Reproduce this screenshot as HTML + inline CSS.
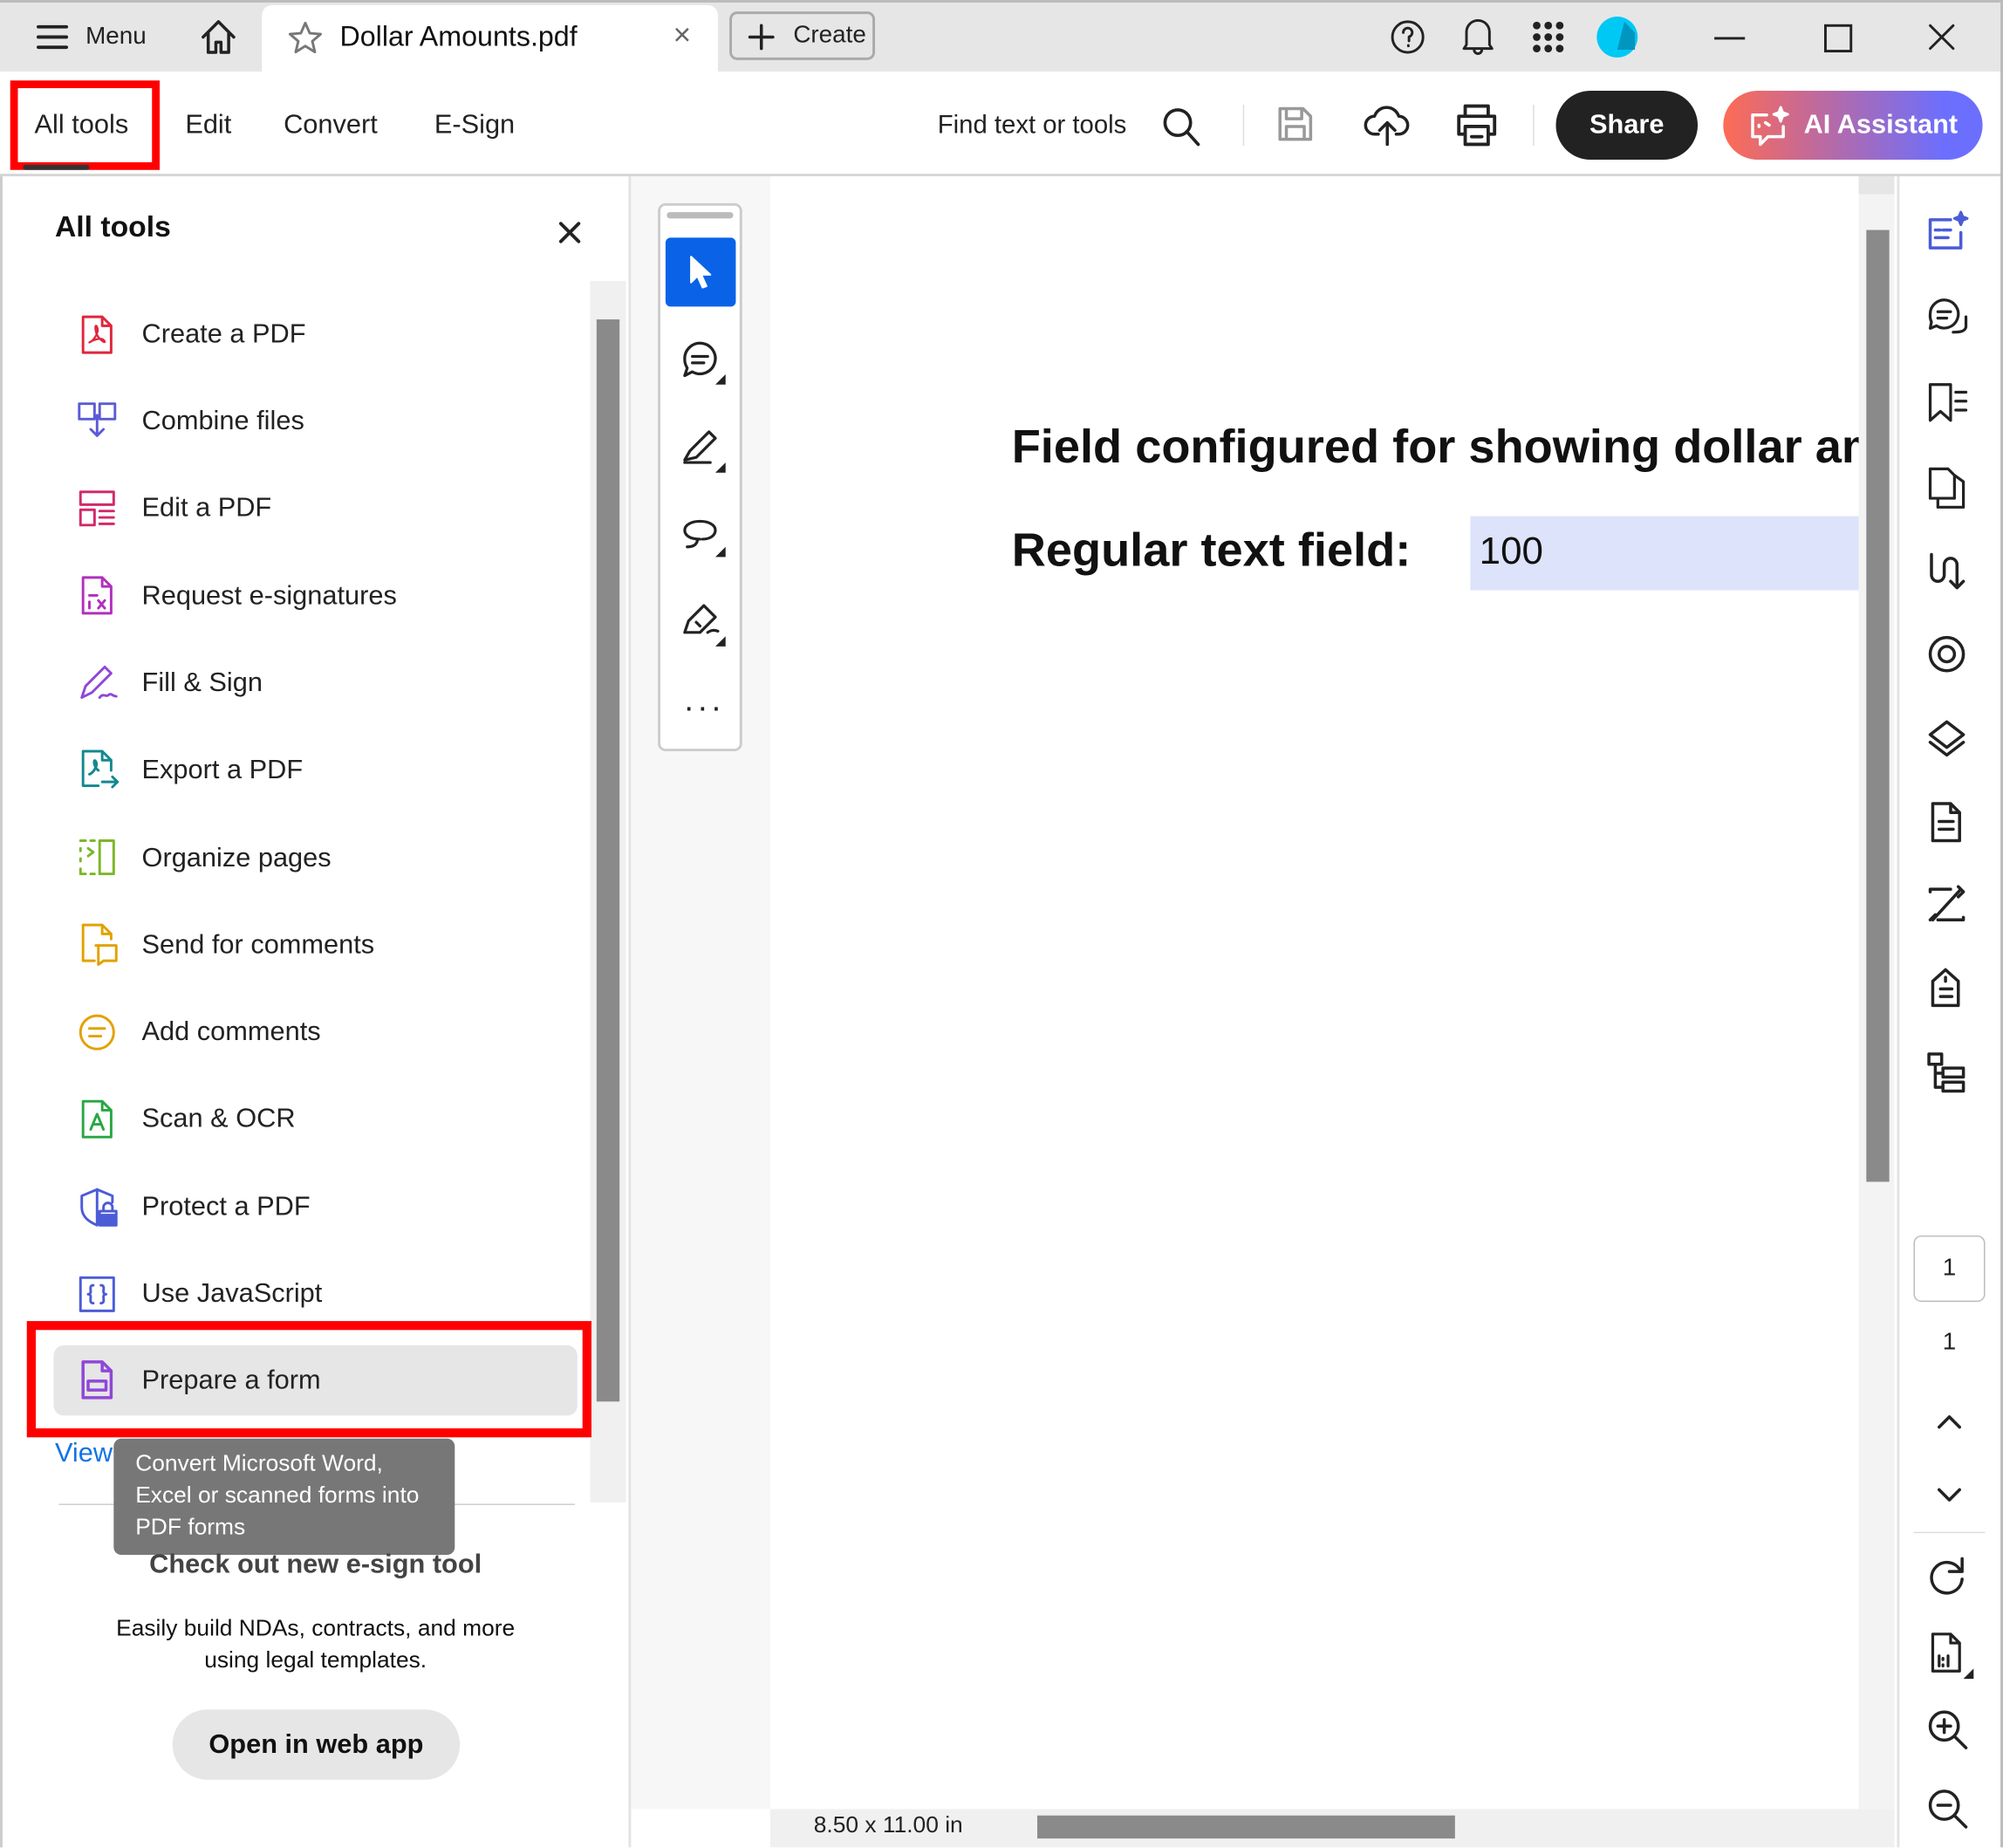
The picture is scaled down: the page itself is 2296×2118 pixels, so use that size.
<!DOCTYPE html>
<html><head><meta charset="utf-8"><style>
html,body{margin:0;padding:0;width:2296px;height:2118px;overflow:hidden;background:#fff}
#w{position:absolute;left:0;top:0;width:1568px;height:1446px;transform:scale(1.464286);transform-origin:0 0;font-family:"Liberation Sans",sans-serif;color:#222;overflow:hidden;background:#fff}
.a{position:absolute}
svg{position:absolute;fill:none;stroke:#222;stroke-width:2;stroke-linecap:round;stroke-linejoin:round}
.it{position:absolute;left:111px;font-size:21px;color:#222}
.tb{font-size:21px;color:#222;position:absolute;top:86px}
</style></head><body><div id="w">
<!-- title bar -->
<div class="a" style="left:0;top:0;width:1568px;height:56px;background:#e6e6e6;border-top:2px solid #bbb;box-sizing:border-box"></div>
<svg style="left:28px;top:18px" width="26" height="22"><path d="M2 3h22M2 11h22M2 19h22" stroke-width="2.6"/></svg>
<div class="a" style="left:67px;top:18px;font-size:19px">Menu</div>
<svg style="left:155px;top:13px" width="32" height="32"><path d="M4 16L16 4l12 12M8 13v15h6v-8h4v8h6V13" stroke-width="2.4"/></svg>
<div class="a" style="left:205px;top:4px;width:357px;height:52px;background:#fff;border-radius:8px 8px 0 0"></div>
<svg style="left:224px;top:15px" width="30" height="30"><path d="M15 3l3.5 8 8.5.7-6.5 5.6 2 8.4L15 21l-7.5 4.7 2-8.4L3 11.7l8.5-.7z" stroke="#777"/></svg>
<div class="a" style="left:266px;top:16px;font-size:22px;color:#111">Dollar Amounts.pdf</div>
<div class="a" style="left:527px;top:14px;font-size:24px;color:#666">×</div>
<div class="a" style="left:571px;top:9px;width:114px;height:38px;border:2px solid #aaa;border-radius:6px;box-sizing:border-box"></div>
<svg style="left:585px;top:18px" width="22" height="22"><path d="M11 2v18M2 11h18" stroke-width="2.4"/></svg>
<div class="a" style="left:621px;top:17px;font-size:19px">Create</div>
<svg style="left:1087px;top:14px" width="30" height="30"><circle cx="15" cy="15" r="12"/><path d="M11.5 11.5a3.5 3.5 0 1 1 4.5 3.3V18M15.5 21.5v.5"/></svg>
<svg style="left:1141px;top:12px" width="32" height="34"><path d="M7 23V13a9 9 0 0 1 18 0v10l2 3H5zM13 27a3 3 0 0 0 6 0"/></svg>
<svg style="left:1198px;top:15px" width="30" height="30"><g fill="#222" stroke="none"><circle cx="5" cy="5" r="3"/><circle cx="14" cy="5" r="3"/><circle cx="23" cy="5" r="3"/><circle cx="5" cy="14" r="3"/><circle cx="14" cy="14" r="3"/><circle cx="23" cy="14" r="3"/><circle cx="5" cy="23" r="3"/><circle cx="14" cy="23" r="3"/><circle cx="23" cy="23" r="3"/></g></svg>
<div class="a" style="left:1250px;top:13px;width:32px;height:32px;border-radius:50%;background:#00c8f5"></div>
<div class="a" style="left:1266px;top:17px;width:14px;height:22px;background:#0096c0;clip-path:polygon(40% 0,100% 40%,100% 100%,0 100%)"></div>
<div class="a" style="left:1342px;top:29px;width:24px;height:2px;background:#222"></div>
<div class="a" style="left:1428px;top:19px;width:18px;height:18px;border:2px solid #222"></div>
<svg style="left:1508px;top:17px" width="24" height="24"><path d="M3 3l18 18M21 3L3 21"/></svg>
<!-- toolbar -->
<div class="a" style="left:0;top:136px;width:1568px;height:2px;background:#d5d5d5"></div>
<div class="a" style="left:8px;top:63px;width:117px;height:70px;border:6px solid #f00;box-sizing:border-box"></div>
<div class="tb" style="left:27px">All tools</div>
<div class="a" style="left:18px;top:129px;width:52px;height:4px;background:#333;border-radius:2px"></div>
<div class="tb" style="left:145px">Edit</div>
<div class="tb" style="left:222px">Convert</div>
<div class="tb" style="left:340px">E-Sign</div>
<div class="tb" style="left:734px;font-size:20px;top:87px">Find text or tools</div>
<svg style="left:908px;top:82px" width="34" height="34"><circle cx="14" cy="14" r="10" stroke-width="2.5"/><path d="M21 21l9 10" stroke-width="2.5"/></svg>
<div class="a" style="left:973px;top:82px;width:1px;height:32px;background:#ddd"></div>
<svg style="left:998px;top:81px" width="32" height="32"><path d="M4 4h18l6 6v18H4zM9 4v8h12V4M9 28V18h14v10" stroke="#999" stroke-width="2.4"/></svg>
<svg style="left:1067px;top:79px" width="38" height="38"><path d="M12 26H9a7 7 0 0 1 0-14 10 10 0 0 1 19 0 7 7 0 0 1 0 14h-2M19 34V17M13 23l6-6 6 6" stroke-width="2.4"/></svg>
<svg style="left:1138px;top:80px" width="36" height="36"><path d="M9 11V3h18v8M4 11h28v14h-5M9 25H4V11M9 19h18v14H9zM14 27h8" stroke-width="2.6"/></svg>
<div class="a" style="left:1200px;top:82px;width:1px;height:32px;background:#ddd"></div>
<div class="a" style="left:1218px;top:71px;width:111px;height:54px;background:#222;border-radius:27px;color:#fff;font-size:21px;font-weight:bold;text-align:center;line-height:54px">Share</div>
<div class="a" style="left:1349px;top:71px;width:203px;height:54px;background:linear-gradient(90deg,#fe6b55,#b86aa5 40%,#6c6ffd 85%);border-radius:27px;color:#fff;font-size:21px;font-weight:bold;line-height:54px;padding-left:63px;box-sizing:border-box">AI Assistant</div>
<svg style="left:1368px;top:82px" width="36" height="34"><path d="M15 8H4v17h6v6l6-6h12v-8M9 16v1M14 14l3 2" stroke="#fff" stroke-width="2.4"/><path d="M26 2l1.5 4 4 1.5-4 1.5-1.5 4-1.5-4-4-1.5 4-1.5z" stroke="#fff" fill="#fff"/></svg>
<!-- left panel -->
<div class="a" style="left:0;top:138px;width:2px;height:1308px;background:#ccc"></div>
<div class="a" style="left:492px;top:138px;width:2px;height:1308px;background:#e3e3e3"></div>
<div class="a" style="left:43px;top:164px;font-size:23px;font-weight:bold;color:#111">All tools</div>
<svg style="left:437px;top:173px" width="18" height="18"><path d="M2 2l14 14M16 2L2 16" stroke-width="2.6"/></svg>
<div class="a" style="left:462px;top:220px;width:28px;height:956px;background:#f0f0f0"></div>
<div class="a" style="left:467px;top:250px;width:18px;height:847px;background:#8a8a8a"></div>
<!-- items -->
<svg style="left:60px;top:246px" width="32" height="32"><path d="M5 2h15l7 7v21H5zM20 2v7h7" stroke="#e0263c"/><path d="M10 22c3-1 8-8 6-12s-2 5 2 9 5 3 3 1-8 0-11 2" stroke="#e0263c" stroke-width="1.6"/></svg>
<div class="it" style="top:250px">Create a PDF</div>
<svg style="left:60px;top:313px" width="32" height="32"><path d="M2 3h12v12H2zM18 3h12v12H18zM16 12v16M11 23l5 5 5-5" stroke="#5b5bd6"/></svg>
<div class="it" style="top:318px">Combine files</div>
<svg style="left:60px;top:382px" width="32" height="32"><path d="M3 3h26v10H3zM3 17h11v12H3zM18 18h11M18 23h11M18 28h11" stroke="#d12a6a"/></svg>
<div class="it" style="top:386px">Edit a PDF</div>
<svg style="left:60px;top:450px" width="32" height="32"><path d="M5 2h15l7 7v21H5zM20 2v7h7M10 16h6M10 21v5M17 20l5 6M22 20l-5 6" stroke="#b130bd"/></svg>
<div class="it" style="top:455px">Request e-signatures</div>
<svg style="left:60px;top:518px" width="34" height="32"><path d="M4 28L7 19 22 4l5 5-15 15zM4 28l8-4M18 28c3-4 5 0 7-2s3 1 6 1" stroke="#8f47d8"/></svg>
<div class="it" style="top:523px">Fill &amp; Sign</div>
<svg style="left:60px;top:586px" width="34" height="34"><path d="M5 2h15l7 7v8M20 2v7h7M5 2v27h12M20 26h12M28 22l4 4-4 4M10 20c3-1 7-7 5-10s-2 4 2 7" stroke="#14888f"/></svg>
<div class="it" style="top:591px">Export a PDF</div>
<svg style="left:60px;top:655px" width="32" height="32"><path d="M18 3h11v26H18zM3 3h4M3 9v2M3 17v2M3 25v4h4M11 3h3M11 29h3M9 9l4 3-4 3" stroke="#7bb828"/></svg>
<div class="it" style="top:660px">Organize pages</div>
<svg style="left:60px;top:722px" width="34" height="34"><path d="M5 2h15l7 7v4M20 2v7h7M5 2v28h9M15 18h16v12H21l-4 3V18" stroke="#e3a100"/></svg>
<div class="it" style="top:728px">Send for comments</div>
<svg style="left:60px;top:792px" width="32" height="32"><circle cx="16" cy="16" r="13" stroke="#e3a100"/><path d="M10 13h12M10 19h9" stroke="#e3a100"/></svg>
<div class="it" style="top:796px">Add comments</div>
<svg style="left:60px;top:860px" width="32" height="32"><path d="M5 2h15l7 7v21H5zM20 2v7h7M11 24l5-12 5 12M13 20h6" stroke="#28a745"/></svg>
<div class="it" style="top:864px">Scan &amp; OCR</div>
<svg style="left:60px;top:928px" width="34" height="34"><path d="M16 3L4 8v9c0 7 5 11 12 14V3M16 3l12 5v5M18 20h13v11H18zM21 20v-3a3.5 3.5 0 0 1 7 0v3" stroke="#4b5cd6"/><path d="M18 22h13v9H18z" fill="#4b5cd6" stroke="none"/></svg>
<div class="it" style="top:933px">Protect a PDF</div>
<svg style="left:60px;top:997px" width="32" height="32"><path d="M3 3h26v26H3zM13 9c-3 0-2 3-2 5s-2 2-2 2 2 0 2 2-1 5 2 5M19 9c3 0 2 3 2 5s2 2 2 2-2 0-2 2 1 5-2 5" stroke="#4b5cd6"/></svg>
<div class="it" style="top:1001px">Use JavaScript</div>
<div class="a" style="left:21px;top:1034px;width:442px;height:91px;border:7px solid #f00;box-sizing:border-box"></div>
<div class="a" style="left:42px;top:1053px;width:410px;height:55px;background:#e6e6e6;border-radius:8px"></div>
<svg style="left:60px;top:1064px" width="32" height="34"><path d="M5 2h15l7 7v21H5zM20 2v7h7M9 17h14v7H9z" stroke="#8f47d8" stroke-width="2.4"/></svg>
<div class="it" style="top:1069px">Prepare a form</div>
<div class="a" style="left:43px;top:1126px;font-size:21px;color:#1473e6">View</div>
<div class="a" style="left:46px;top:1177px;width:404px;height:1px;background:#ccc"></div>
<div class="a" style="left:89px;top:1126px;width:267px;height:91px;background:#777;border-radius:6px;color:#fff;font-size:18px;line-height:25px;padding:7px 0 0 17px;box-sizing:border-box">Convert Microsoft Word,<br>Excel or scanned forms into<br>PDF forms</div>
<div class="a" style="left:0;top:1213px;width:494px;text-align:center;font-size:21px;font-weight:bold;color:#444">Check out new e-sign tool</div>
<div class="a" style="left:0;top:1262px;width:494px;text-align:center;font-size:18px;line-height:25px;color:#111">Easily build NDAs, contracts, and more<br>using legal templates.</div>
<div class="a" style="left:135px;top:1338px;width:225px;height:55px;background:#e6e6e6;border-radius:28px;text-align:center;line-height:55px;font-size:21px;font-weight:bold;color:#111">Open in web app</div>
<!-- center -->
<div class="a" style="left:494px;top:138px;width:109px;height:1278px;background:#f7f7f7"></div>
<div class="a" style="left:515px;top:159px;width:66px;height:429px;background:#fff;border:2px solid #ccc;border-radius:6px;box-sizing:border-box"></div>
<div class="a" style="left:522px;top:166px;width:52px;height:5px;background:#bbb;border-radius:3px"></div>
<div class="a" style="left:521px;top:186px;width:55px;height:54px;background:#0a63e6;border-radius:4px"></div>
<svg style="left:538px;top:199px" width="22" height="28"><path d="M3 2v20l5-5 4 9 3-1-4-9h7z" fill="#fff" stroke="#fff" stroke-width="1.5"/></svg>
<svg style="left:532px;top:265px" width="38" height="38"><path d="M4 16a12 12 0 1 1 6 10l-6 3 2-6a12 12 0 0 1-2-7zM10 14h12M10 19h9" stroke-width="2.2"/><path d="M36 28v8h-8z" fill="#222" stroke="none"/></svg>
<svg style="left:532px;top:332px" width="38" height="40"><path d="M4 28l4-7 15-15 5 5-15 15zM4 30h20" stroke-width="2.2"/><path d="M36 30v8h-8z" fill="#222" stroke="none"/></svg>
<svg style="left:532px;top:400px" width="38" height="38"><path d="M16 22c-8 0-12-3-12-7s5-7 12-7 12 3 12 7-4 7-10 7M14 22c0 4-3 6-8 6" stroke-width="2.2"/><path d="M36 28v8h-8z" fill="#222" stroke="none"/></svg>
<svg style="left:532px;top:468px" width="38" height="40"><path d="M4 27l3-9 12-12 9 9-12 12zM13 19l3 3M22 27c3-2 5-2 8-1" stroke-width="2.2"/><path d="M36 30v8h-8z" fill="#222" stroke="none"/></svg>
<div class="a" style="left:535px;top:538px;font-size:26px;letter-spacing:2px">···</div>
<!-- page -->
<div class="a" style="left:603px;top:138px;width:852px;height:1278px;background:#fff"></div>
<div class="a" style="left:792px;top:329px;font-size:37px;font-weight:bold;color:#111;white-space:nowrap;width:663px;overflow:hidden">Field configured for showing dollar amounts</div>
<div class="a" style="left:792px;top:410px;font-size:37px;font-weight:bold;color:#111">Regular text field:</div>
<div class="a" style="left:1151px;top:404px;width:304px;height:58px;background:#dde3fa"></div>
<div class="a" style="left:1158px;top:415px;font-size:30px;color:#111">100</div>
<!-- right scrollbar -->
<div class="a" style="left:1455px;top:138px;width:28px;height:1278px;background:#f3f3f3"></div>
<div class="a" style="left:1455px;top:138px;width:28px;height:14px;background:#e6e6e6"></div>
<div class="a" style="left:1461px;top:180px;width:18px;height:745px;background:#8a8a8a"></div>
<!-- bottom status -->
<div class="a" style="left:603px;top:1416px;width:880px;height:30px;background:#f0f0f0"></div>
<div class="a" style="left:637px;top:1418px;font-size:18px;color:#222">8.50 x 11.00 in</div>
<div class="a" style="left:812px;top:1421px;width:327px;height:18px;background:#8a8a8a"></div>
<!-- right rail -->
<div class="a" style="left:1485px;top:138px;width:2px;height:1308px;background:#e3e3e3"></div>
<div class="a" style="left:1566px;top:0;width:2px;height:1446px;background:#bbb"></div>
<svg style="left:1507px;top:164px" width="36" height="34"><path d="M4 8h16M4 8v22h24V18M8 16h4M8 22h10M14 16h6" stroke="#4b5cd6" stroke-width="2.4"/><path d="M28 2l1.5 3.5 3.5 1.5-3.5 1.5-1.5 3.5-1.5-3.5-3.5-1.5 3.5-1.5z" fill="#4b5cd6" stroke="#4b5cd6"/></svg>
<svg style="left:1507px;top:232px" width="36" height="36"><path d="M4 14a11 11 0 1 1 5 9l-5 2 1-5a11 11 0 0 1-1-6zM10 12h10M10 17h7M22 28c4 0 9 0 10-4v-8" stroke-width="2.2"/></svg>
<svg style="left:1507px;top:298px" width="36" height="36"><path d="M4 3h16v28l-8-7-8 7zM24 9h8M24 16h8M24 23h8" stroke-width="2.2"/></svg>
<svg style="left:1507px;top:364px" width="36" height="36"><path d="M4 3h14l5 5v18H4zM10 26v7h20V13l-7-5" stroke-width="2.2"/></svg>
<svg style="left:1507px;top:430px" width="36" height="36"><path d="M5 4v16a5 5 0 0 0 10 0v-8a5 5 0 0 1 10 0v18M20 25l5 5 5-5" stroke-width="2.4"/></svg>
<svg style="left:1507px;top:495px" width="36" height="36"><circle cx="17" cy="17" r="13" stroke-width="2.4"/><circle cx="17" cy="17" r="6" stroke-width="2.4"/></svg>
<svg style="left:1507px;top:561px" width="36" height="36"><path d="M17 4l13 10-13 10L4 14zM4 20l13 10 13-10" stroke-width="2.4"/></svg>
<svg style="left:1507px;top:626px" width="36" height="36"><path d="M6 3h14l7 7v22H6zM20 3v7h7M11 17h11M11 23h11" stroke-width="2.4"/></svg>
<svg style="left:1507px;top:691px" width="36" height="36"><path d="M4 5h16M4 5v2M28 5l-22 24M10 29h20M30 29v-2M26 3l4 4-4 4M8 25l-4 4" stroke-width="2.4"/></svg>
<svg style="left:1507px;top:756px" width="36" height="36"><path d="M6 12l10-9 10 9v19H6zM12 18h9M12 24h9M16 9v3" stroke-width="2.4"/></svg>
<svg style="left:1507px;top:822px" width="36" height="36"><path d="M3 3h10v8H3zM8 11v18h6M8 18h6M14 14h16v7H14zM14 25h16v7H14z" stroke-width="2.4"/></svg>
<div class="a" style="left:1498px;top:967px;width:56px;height:52px;border:1.5px solid #bbb;border-radius:6px;box-sizing:border-box;text-align:center;line-height:50px;font-size:19px">1</div>
<div class="a" style="left:1498px;top:1040px;width:56px;text-align:center;font-size:19px">1</div>
<svg style="left:1514px;top:1103px" width="24" height="20"><path d="M4 14l8-8 8 8" stroke-width="2.4"/></svg>
<svg style="left:1514px;top:1160px" width="24" height="20"><path d="M4 6l8 8 8-8" stroke-width="2.4"/></svg>
<div class="a" style="left:1498px;top:1199px;width:56px;height:1px;background:#ddd"></div>
<svg style="left:1507px;top:1216px" width="36" height="36"><path d="M28 14a12 12 0 1 0 1 6M29 4v10H19" stroke-width="2.4"/></svg>
<svg style="left:1507px;top:1276px" width="40" height="40"><path d="M6 3h14l7 7v22H6zM20 3v7h7M11 20v8M14 22v1M14 27v1M18 20v8" stroke-width="2.2"/><path d="M38 30v8h-8z" fill="#222" stroke="none"/></svg>
<svg style="left:1507px;top:1336px" width="36" height="36"><circle cx="15" cy="15" r="11" stroke-width="2.4"/><path d="M23 23l9 9M10 15h10M15 10v10" stroke-width="2.4"/></svg>
<svg style="left:1507px;top:1398px" width="36" height="36"><circle cx="15" cy="15" r="11" stroke-width="2.4"/><path d="M23 23l9 9M10 15h10" stroke-width="2.4"/></svg>
</div></body></html>
